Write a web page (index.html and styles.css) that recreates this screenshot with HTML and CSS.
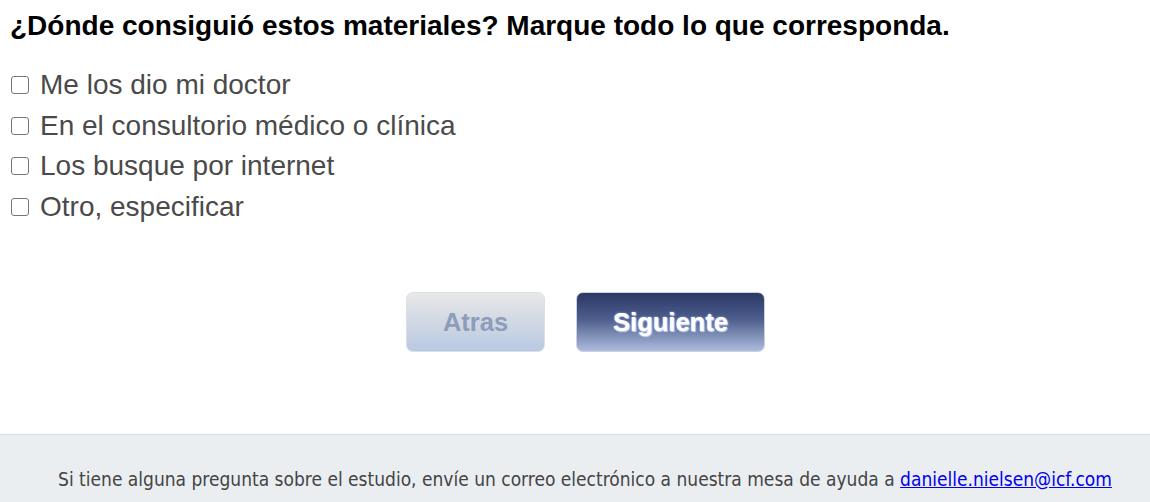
FILE: index.html
```html
<!DOCTYPE html>
<html lang="es">
<head>
<meta charset="utf-8">
<title>Encuesta</title>
<link rel="stylesheet" href="styles.css">
</head>
<body>
<main class="page">
  <h1 class="question">¿Dónde consiguió estos materiales? Marque todo lo que corresponda.</h1>
  <ul class="options">
    <li><label class="option"><input type="checkbox" class="box"><span>Me los dio mi doctor</span></label></li>
    <li><label class="option"><input type="checkbox" class="box"><span>En el consultorio médico o clínica</span></label></li>
    <li><label class="option"><input type="checkbox" class="box"><span>Los busque por internet</span></label></li>
    <li><label class="option"><input type="checkbox" class="box"><span>Otro, especificar</span></label></li>
  </ul>
  <div class="nav">
    <button class="btn btn-back" type="button">Atras</button>
    <button class="btn btn-next" type="button">Siguiente</button>
  </div>
</main>
<footer class="footer">
  <p>Si tiene alguna pregunta sobre el estudio, envíe un correo electrónico a nuestra mesa de ayuda a <a href="#">danielle.nielsen@icf.com</a></p>
</footer>
</body>
</html>
```
FILE: styles.css
```css
html, body {
  margin: 0;
  padding: 0;
  background: #fff;
}
body {
  font-family: "Liberation Sans", Arial, sans-serif;
}
.page {
  padding: 11px 10px 0 10px;
  height: 434px;
  box-sizing: border-box;
}
.question {
  margin: 0;
  font-family: "Liberation Sans", Arial, sans-serif;
  font-size: 28px;
  font-weight: bold;
  color: #000;
  line-height: 30px;
}
.options {
  list-style: none;
  margin: 24px 0 0 0;
  padding: 0;
}
.option {
  display: flex;
  align-items: center;
  height: 40.5px;
  font-size: 28px;
  color: #4a4a4a;
}
.box {
  appearance: none;
  -webkit-appearance: none;
  width: 18px;
  height: 18px;
  margin: 0 11px 0 1px;
  border: 1px solid #767676;
  border-radius: 3px;
  background: #fff;
  box-sizing: border-box;
}
.nav {
  display: flex;
  justify-content: center;
  gap: 31px;
  margin-top: 65px;
  padding-left: 21px;
}
.btn {
  height: 60px;
  border-radius: 7px;
  font-family: "Liberation Sans", Arial, sans-serif;
  font-weight: bold;
  font-size: 25.5px;
  cursor: pointer;
  box-sizing: border-box;
  padding: 0;
}
.btn-back {
  width: 139px;
  border: 1px solid #dcdfe5;
  background: linear-gradient(to bottom, #e8e8e8 0%, #d3d9e4 45%, #b8c9e3 100%);
  color: #8d9dba;
}
.btn-next {
  width: 189px;
  border: 1px solid #c9d1e2;
  background: linear-gradient(to bottom, #2b3866 0%, #4d5e8c 45%, #adbcdd 100%);
  color: #fff;
  text-shadow: 0 0 2px #b9c7f5, 1px 1px 1px #cdd6f7;
}
.footer {
  border-top: 1px solid #d9dde2;
  background: #ebeef1;
  height: 68px;
  box-sizing: border-box;
  padding-top: 32px;
  text-align: center;
  padding-left: 20px;
}
.footer p {
  margin: 0;
  font-family: "DejaVu Sans Condensed", "DejaVu Sans", sans-serif;
  font-size: 19px;
  line-height: 24px;
  color: #444;
}
.footer a {
  color: #0000ee;
  text-decoration: underline;
}
```
